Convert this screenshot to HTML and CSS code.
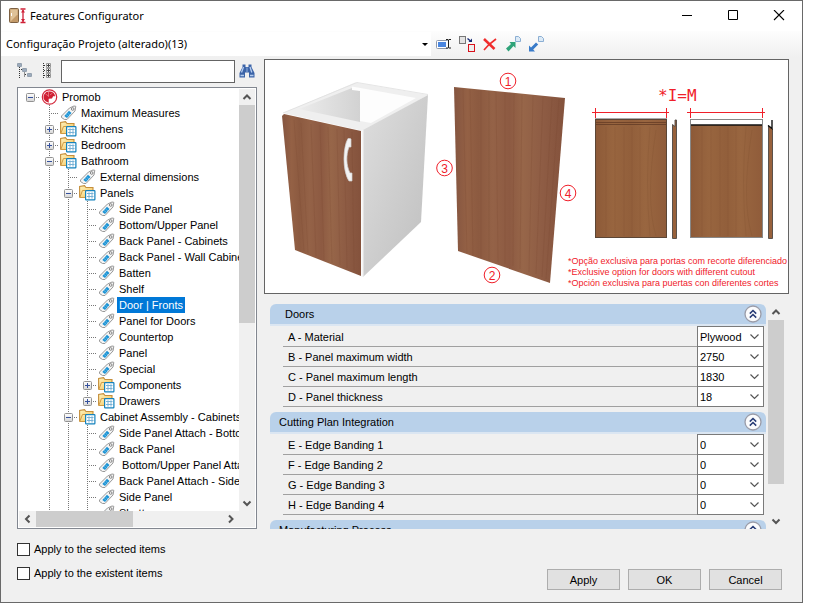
FILE: index.html
```html
<!DOCTYPE html>
<html lang="en">
<head>
<meta charset="utf-8">
<title>Features Configurator</title>
<link rel="stylesheet" href="styles.css">
</head>
<body>
<svg class="sprite" width="0" height="0" aria-hidden="true">
  <defs>
    <linearGradient id="folder-fill" x1="0" y1="0" x2="1" y2="1"><stop offset="0" stop-color="#fff3bd"/><stop offset="1" stop-color="#f0bf55"/></linearGradient>
    <linearGradient id="box-fill" x1="0" y1="0" x2="0" y2="1"><stop offset="0" stop-color="#fff"/><stop offset="1" stop-color="#d5d5d5"/></linearGradient>
  </defs>
  <symbol id="tag" viewBox="0 0 16 16">
    <path d="M1 11 9 3l4.500-2 1.800.3L14.500 6 6.500 14.500H4L1 12.500Z" fill="#f4f4f4" stroke="#999" stroke-width="1"/>
    <path d="M3.800 11 8.500 5.800 11 8 6.500 13Z" fill="#1c93d4"/>
    <path d="M5.500 9.500l2.600 2M7 8l2.500 2" stroke="#8bccef" stroke-width=".6"/>
    <circle cx="12.200" cy="4" r="1.300" fill="#fff" stroke="#777" stroke-width=".9"/>
  </symbol>
  <symbol id="folder" viewBox="0 0 17 16">
    <path d="M.6 12.500V1.500L5.500.6 7 2.500h7v3.500" fill="url(#folder-fill)" stroke="#c58f3c" stroke-width="1.100"/>
    <path d="M.8 12.500 3.500 5.500H14V12.500Z" fill="url(#folder-fill)" stroke="#cf9b45" stroke-width="1"/>
    <rect x="6.600" y="5.600" width="9.300" height="9.300" rx=".6" fill="#fff" stroke="#1382bd" stroke-width="1.200"/>
    <path d="M8 8.500h6.500M8 11.500h6.500M10 7.300v6.300M13 7.300v6.300" stroke="#79b2d6" stroke-width="1"/>
  </symbol>
  <symbol id="plus" viewBox="0 0 9 9"><rect x=".5" y=".5" width="8" height="8" rx="1" fill="url(#box-fill)" stroke="#929292"/><path d="M2 4.500h5M4.500 2v5" stroke="#34509c"/></symbol>
  <symbol id="minus" viewBox="0 0 9 9"><rect x=".5" y=".5" width="8" height="8" rx="1" fill="url(#box-fill)" stroke="#929292"/><path d="M2 4.500h5" stroke="#34509c"/></symbol>
  <symbol id="promob" viewBox="0 0 16 16"><circle cx="8" cy="8" r="7.200" fill="#fff" stroke="#d3283b" stroke-width="1.200"/><path d="M8.300 2.500A5.600 5.600 0 0 0 4 12.300L7.200 13.700V9.800l3.300-.3 1.100-2.200h2A5.600 5.600 0 0 0 8.300 2.500Z" fill="#d01f33"/><path d="M7 2.800v5M4 5l3 2M11 4 8.500 6" stroke="#f7b6bc" stroke-width=".5"/></symbol>
  <symbol id="up" viewBox="0 0 16 16"><path d="M4.500 10 8 6.500 11.500 10" fill="none" stroke="#555" stroke-width="2"/></symbol>
  <symbol id="down" viewBox="0 0 16 16"><path d="M4.500 6.500 8 10l3.500-3.500" fill="none" stroke="#555" stroke-width="2"/></symbol>
  <symbol id="left" viewBox="0 0 16 16"><path d="M10 4.500 6.500 8l3.500 3.500" fill="none" stroke="#555" stroke-width="2"/></symbol>
  <symbol id="right" viewBox="0 0 16 16"><path d="M6.500 4.500 10 8l-3.500 3.500" fill="none" stroke="#555" stroke-width="2"/></symbol>
  <symbol id="collapse" viewBox="0 0 18 18"><circle cx="9" cy="9" r="8" fill="#fafbfd" stroke="#9a9ca8" stroke-width="1.300"/><path d="M5.800 8.600 9 5.500l3.200 3.100M5.800 12.600 9 9.500l3.200 3.100" fill="none" stroke="#253a75" stroke-width="1.500"/></symbol>
</svg>

<div class="window">
  <header class="titlebar">
    <svg class="app-icon" width="18" height="16" viewBox="0 0 18 16"><rect x=".5" y=".5" width="9" height="14" rx="1" fill="#c39a69" stroke="#7c6042"/><path d="M1.500 1.500h7v5l-7 7Z" fill="#dfc298"/><path d="M2.500 5v3" stroke="#fff"/><path d="M11.500 1h5M11.500 14.500h5M14 2v12" stroke="#cf2037" stroke-width="1.300"/><path d="M12 4.500 14 1.500 16 4.500ZM12 11 14 14l2-3Z" fill="#cf2037"/></svg>
    <h1>Features Configurator</h1>
    <button class="caption" aria-label="Minimize"><svg width="12" height="12" viewBox="0 0 12 12"><path d="M1 5.500h10" stroke="#000"/></svg></button>
    <button class="caption" aria-label="Maximize"><svg width="12" height="12" viewBox="0 0 12 12"><path d="M1.500.5h9v9h-9Z" fill="none" stroke="#000"/></svg></button>
    <button class="caption" aria-label="Close"><svg width="12" height="12" viewBox="0 0 12 12"><path d="M1 0l10 10M11 0 1 10" stroke="#000" stroke-width="1.100"/></svg></button>
  </header>

  <div class="toolbar">
    <button class="project"><span>Configuração Projeto (alterado)(13)</span><svg width="6" height="3" viewBox="0 0 6 3"><path d="M0 0h6L3 3Z"/></svg></button>
    <button class="tool" aria-label="Rename"><svg width="16" height="16" viewBox="0 0 16 16"><rect x=".5" y="4.500" width="12" height="8" rx="1" fill="#fff" stroke="#8e98aa"/><rect x="2" y="6" width="8" height="5" fill="#4a86e0"/><path d="M10 3.500h2l.5.500.5-.5h2M12.500 4v7.500M10 12h2l.5-.5.5.5h2" stroke="#222" fill="none"/></svg></button>
    <button class="tool" aria-label="Replace"><svg width="16" height="16" viewBox="0 0 16 16"><rect x=".5" y=".5" width="6" height="7" fill="#e3e3e3" stroke="#777"/><rect x="9.500" y="8.500" width="6" height="7" fill="#eee" stroke="#d8111b"/><path d="M8.500 2.500l3 2.500" stroke="#172a75" stroke-width="1.300"/><path d="M13 2.500V6H9.500Z" fill="#172a75"/></svg></button>
    <button class="tool" aria-label="Delete"><svg width="16" height="16" viewBox="0 0 16 16"><path d="M2 3l10.500 10" stroke="#f02c2c" stroke-width="2.500"/><path d="M14 3 7 8.500 2 14" fill="none" stroke="#f02c2c" stroke-width="1.700"/></svg></button>
    <button class="tool" aria-label="Export"><svg width="16" height="16" viewBox="0 0 16 16"><path d="M1 12.500 6 8 4.500 6H10.500V12L8.500 10l-5 5.500Z" fill="#2fa379"/><path d="M10.500.5h3l2 2v3h-5Z" fill="#dceaf6" stroke="#8baed3"/></svg></button>
    <button class="tool" aria-label="Import"><svg width="16" height="16" viewBox="0 0 16 16"><path d="M1 9.500v6h6L5.200 13.500l5-5L8 6.500l-5 5Z" fill="#397bc9"/><path d="M10.500.5h3l2 2v3h-5Z" fill="#dceaf6" stroke="#8baed3"/></svg></button>
  </div>

  <main class="content">
    <section class="side">
      <form class="search">
        <button class="tool" type="button" aria-label="Collapse all"><svg width="16" height="16" viewBox="0 0 16 16"><path d="M2.500 4v11M7.500 8.500v6M4 6.500h3M8 11.500h4" stroke="#333" stroke-dasharray="1 1" fill="none"/><path d="M.5.500h4v3h-4ZM5.500 5.500h4v3h-4ZM10.500 10.500h4v3h-4Z" fill="#fff" stroke="#94a1ae"/><path d="M1 2h3M6 7h3M11 12h3" stroke="#39577a"/></svg></button>
        <button class="tool" type="button" aria-label="Expand all"><svg width="16" height="16" viewBox="0 0 16 16"><path d="M4.500 0v16M5 2.500h4M5 7.500h4M5 12.500h4" stroke="#333" stroke-dasharray="1 1" fill="none"/><path d="M7.500.5h4v4h-4ZM7.500 5.500h4v4h-4ZM7.500 10.500h4v4h-4Z" fill="#f4f4f4" stroke="#999"/><path d="M8 2.500h3M9.500 1v3M8 7.500h3M9.500 6v3M8 12.500h3M9.500 11v3" stroke="#444"/></svg></button>
        <input type="text" aria-label="Search features">
        <button class="tool find" aria-label="Find"><svg width="16" height="16" viewBox="0 0 16 16"><path d="M3.500 1.500h3V4h3V1.500h3V4l3 6v4.500H10V9.500H6v5H.5V10l3-6Z" fill="#3c64a8"/><path d="M2.500 9.500 4.500 4M11 4l1.800 5.500M1.500 12.500H5M11 12.500h3.500" stroke="#b5cdf0" stroke-width="1.300"/><path d="M8 4.500v4.500" stroke="#8fb0e0"/></svg></button>
      </form>

      <div class="tree-box">
        <div class="tree-view">
          <ul class="tree">
            <li><div class="row"><i class="join"><svg class="box"><use href="#minus"/></svg></i><svg class="ico"><use href="#promob"/></svg><span>Promob</span></div>
              <ul>
                <li><div class="row"><i class="join"></i><svg class="ico"><use href="#tag"/></svg><span>Maximum Measures</span></div></li>
                <li><div class="row"><i class="join"><svg class="box"><use href="#plus"/></svg></i><svg class="ico"><use href="#folder"/></svg><span>Kitchens</span></div></li>
                <li><div class="row"><i class="join"><svg class="box"><use href="#plus"/></svg></i><svg class="ico"><use href="#folder"/></svg><span>Bedroom</span></div></li>
                <li class="open"><div class="row"><i class="join"><svg class="box"><use href="#minus"/></svg></i><svg class="ico"><use href="#folder"/></svg><span>Bathroom</span></div>
                  <ul>
                    <li><div class="row"><i class="join"></i><svg class="ico"><use href="#tag"/></svg><span>External dimensions</span></div></li>
                    <li><div class="row"><i class="join"><svg class="box"><use href="#minus"/></svg></i><svg class="ico"><use href="#folder"/></svg><span>Panels</span></div>
                      <ul>
                        <li><div class="row"><i class="join"></i><svg class="ico"><use href="#tag"/></svg><span>Side Panel</span></div></li>
                        <li><div class="row"><i class="join"></i><svg class="ico"><use href="#tag"/></svg><span>Bottom/Upper Panel</span></div></li>
                        <li><div class="row"><i class="join"></i><svg class="ico"><use href="#tag"/></svg><span>Back Panel - Cabinets</span></div></li>
                        <li><div class="row"><i class="join"></i><svg class="ico"><use href="#tag"/></svg><span>Back Panel - Wall Cabinets</span></div></li>
                        <li><div class="row"><i class="join"></i><svg class="ico"><use href="#tag"/></svg><span>Batten</span></div></li>
                        <li><div class="row"><i class="join"></i><svg class="ico"><use href="#tag"/></svg><span>Shelf</span></div></li>
                        <li><div class="row"><i class="join"></i><svg class="ico"><use href="#tag"/></svg><span class="selected">Door | Fronts</span></div></li>
                        <li><div class="row"><i class="join"></i><svg class="ico"><use href="#tag"/></svg><span>Panel for Doors</span></div></li>
                        <li><div class="row"><i class="join"></i><svg class="ico"><use href="#tag"/></svg><span>Countertop</span></div></li>
                        <li><div class="row"><i class="join"></i><svg class="ico"><use href="#tag"/></svg><span>Panel</span></div></li>
                        <li><div class="row"><i class="join"></i><svg class="ico"><use href="#tag"/></svg><span>Special</span></div></li>
                        <li><div class="row"><i class="join"><svg class="box"><use href="#plus"/></svg></i><svg class="ico"><use href="#folder"/></svg><span>Components</span></div></li>
                        <li><div class="row"><i class="join"><svg class="box"><use href="#plus"/></svg></i><svg class="ico"><use href="#folder"/></svg><span>Drawers</span></div></li>
                      </ul>
                    </li>
                    <li class="open"><div class="row"><i class="join"><svg class="box"><use href="#minus"/></svg></i><svg class="ico"><use href="#folder"/></svg><span>Cabinet Assembly - Cabinets</span></div>
                      <ul>
                        <li><div class="row"><i class="join"></i><svg class="ico"><use href="#tag"/></svg><span>Side Panel Attach - Bottom</span></div></li>
                        <li><div class="row"><i class="join"></i><svg class="ico"><use href="#tag"/></svg><span>Back Panel</span></div></li>
                        <li><div class="row"><i class="join"></i><svg class="ico"><use href="#tag"/></svg><span>&nbsp;Bottom/Upper Panel Attach</span></div></li>
                        <li><div class="row"><i class="join"></i><svg class="ico"><use href="#tag"/></svg><span>Back Panel Attach - Side</span></div></li>
                        <li><div class="row"><i class="join"></i><svg class="ico"><use href="#tag"/></svg><span>Side Panel</span></div></li>
                        <li class="open"><div class="row"><i class="join"></i><svg class="ico"><use href="#tag"/></svg><span>Shutter</span></div></li>
                      </ul>
                    </li>
                  </ul>
                </li>
              </ul>
            </li>
          </ul>
        </div>
        <div class="vbar tree-vbar"><svg class="arrow"><use href="#up"/></svg><div class="track"><div class="thumb"></div></div><svg class="arrow"><use href="#down"/></svg></div>
        <div class="hbar"><svg class="arrow"><use href="#left"/></svg><div class="track"><div class="thumb"></div></div><svg class="arrow"><use href="#right"/></svg></div>
      </div>
    </section>

    <section class="main">
      <svg class="preview" viewBox="265 60 523 233" role="img" aria-label="Door diagram">
        <defs>
          <linearGradient id="wood" x1="0" x2="1" y1="0" y2="0"><stop offset="0" stop-color="#855540"/><stop offset=".12" stop-color="#946145"/><stop offset=".22" stop-color="#8c5a40"/><stop offset=".35" stop-color="#946247"/><stop offset=".5" stop-color="#8d5a42"/><stop offset=".62" stop-color="#976649"/><stop offset=".8" stop-color="#8e5c44"/><stop offset="1" stop-color="#84523c"/></linearGradient>
          <linearGradient id="wood-flat" x1="0" x2="1" y1="0" y2="0"><stop offset="0" stop-color="#8d5a38"/><stop offset=".25" stop-color="#98653f"/><stop offset=".5" stop-color="#925f3b"/><stop offset=".7" stop-color="#996640"/><stop offset="1" stop-color="#905c3a"/></linearGradient>
          <linearGradient id="side-fill" x1="0" y1="0" x2="1" y2="1"><stop offset="0" stop-color="#dedede"/><stop offset=".5" stop-color="#cecece"/><stop offset="1" stop-color="#bfbfbf"/></linearGradient>
          <linearGradient id="inner-fill" x1="0" x2="1"><stop offset="0" stop-color="#ececec"/><stop offset="1" stop-color="#d2d2d2"/></linearGradient>
        </defs>
        <path d="M283 113 355 82.500 428 95 363 131Z" fill="#efefef"/>
        <path d="M299 109 352 88 360 91V122Z" fill="url(#inner-fill)"/>
        <path d="M360 91 352 90V86.500L416 98 371 123 360 121Z" fill="#fdfdfd"/>
        <path d="M283 113 357 82.500 428 94.500" fill="none" stroke="#dedede" stroke-width=".8"/>
        <path d="M363 130 428 95 421 222 363 277Z" fill="url(#side-fill)"/>
        <path d="M362.500 130v147" stroke="#f5f5f5" stroke-width="2"/>
        <path d="M282 116 284 114 361 131V276L295 250Z" fill="url(#wood)"/>
        <g stroke="#74452e" stroke-opacity=".18" fill="none"><path d="M294 120 304 251M301 123 308 253M311 124 316 256M320 125 324 260M328 127 332 263M337 129 340 265M344 129 347 268M352 132 354 270"/></g>
        <path d="M350 138.500h-2c-5 8-6 32 1 42.500h3v-8h-2c-4-8-4-18-1-26h2v-8Z" fill="#f3f3f3" stroke="#cfcfcf" stroke-width=".7"/>
        <path d="M454 87 565 98 550 283 458 251Z" fill="url(#wood)"/>
        <g stroke="#74452e" stroke-opacity=".18" fill="none"><path d="M463 89 467 253M470 89 473 256M481 90v168M489 91v170M496 92l2 170M505 93v171M514 94l-1 172M522 95l-2 174M533 96l-4 176M543 97l-7 177M552 98l-10 179M559 99l-13 180"/></g>
        <g class="mark"><circle cx="508" cy="81" r="7.800"/><circle cx="492" cy="275" r="7.800"/><circle cx="444.500" cy="168" r="7.800"/><circle cx="568" cy="193" r="7.800"/></g>
        <g class="mark-text"><text x="508" y="85.500">1</text><text x="492" y="279.500">2</text><text x="444.500" y="172.500">3</text><text x="568" y="197.500">4</text></g>
        <text class="formula" x="658" y="101">*I=M</text>
        <g class="mark"><path d="M592 112.500h77M595.500 108v10M666.500 108v10M687 112.500h78M690.500 108v10M762.500 108v10"/></g>
        <rect x="595.500" y="119.500" width="71" height="118" fill="url(#wood-flat)" stroke="#5b4636"/>
        <path d="M595 118.500h72" stroke="#aaa"/><path d="M596 122.500h70" stroke="#6f4329"/><path d="M596 124.500h70" stroke="#5b3722" stroke-width=".7"/>
        <rect x="690.500" y="119.500" width="72" height="118" fill="#fff" stroke="#888"/>
        <rect x="691" y="125" width="71" height="112" fill="url(#wood-flat)"/><path d="M691 125h71" stroke="#111" stroke-width="1.600"/>
        <g stroke="#704324" stroke-opacity=".16" fill="none"><path d="M606 127v109M615 127v109M624 127v109M632 127v109M640 127v109M650 127q-5 55 0 109M656 130q-11 70 0 106M702 127v109M711 127v109M720 127v109M728 127v109M736 127v109M746 127q-5 55 0 109M752 130q-11 70 0 106"/></g>
        <path d="M672.500 124.500 675 126.500V120h1.500v118.500h-4Z" fill="#98613b" stroke="#4e4743" stroke-width=".9"/>
        <path d="M768.500 125.500 772.500 129v109.500h-4Z" fill="#98613b" stroke="#4e4743" stroke-width=".9"/><path d="M768 125.500l4 3V120" fill="none" stroke="#111" stroke-width="1.400"/>
        <g class="note"><text x="568" y="264">*Opção exclusiva para portas com recorte diferenciado</text><text x="568" y="275">*Exclusive option for doors with different cutout</text><text x="568" y="286">*Opción exclusiva para puertas con diferentes cortes</text></g>
      </svg>

      <div class="settings">
        <div class="groups">
          <section class="group">
            <h2 class="first">Doors<button aria-label="Collapse Doors"><svg width="18" height="18"><use href="#collapse"/></svg></button></h2>
            <div class="fields">
              <div class="field"><label for="a">A - Material</label><select id="a"><option>Plywood</option></select></div>
              <div class="field"><label for="b">B - Panel maximum width</label><select id="b"><option>2750</option></select></div>
              <div class="field"><label for="c">C - Panel maximum length</label><select id="c"><option>1830</option></select></div>
              <div class="field"><label for="d">D - Panel thickness</label><select id="d"><option>18</option></select></div>
            </div>
          </section>
          <section class="group">
            <h2>Cutting Plan Integration<button aria-label="Collapse Cutting Plan Integration"><svg width="18" height="18"><use href="#collapse"/></svg></button></h2>
            <div class="fields">
              <div class="field"><label for="e">E - Edge Banding 1</label><select id="e"><option>0</option></select></div>
              <div class="field"><label for="f">F - Edge Banding 2</label><select id="f"><option>0</option></select></div>
              <div class="field"><label for="g">G - Edge Banding 3</label><select id="g"><option>0</option></select></div>
              <div class="field"><label for="h">H - Edge Banding 4</label><select id="h"><option>0</option></select></div>
            </div>
          </section>
          <section class="group">
            <h2>Manufacturing Process<button aria-label="Collapse Manufacturing Process"><svg width="18" height="18"><use href="#collapse"/></svg></button></h2>
          </section>
        </div>
        <div class="vbar settings-vbar"><svg class="arrow"><use href="#up"/></svg><div class="track"><div class="thumb"></div></div><svg class="arrow"><use href="#down"/></svg></div>
      </div>
    </section>
  </main>

  <footer class="footer">
    <div class="checks">
      <label><input type="checkbox">Apply to the selected items</label>
      <label><input type="checkbox">Apply to the existent items</label>
    </div>
    <div class="actions"><button>Apply</button><button>OK</button><button>Cancel</button></div>
  </footer>
</div>
</body>
</html>
```
FILE: styles.css
```css
* { box-sizing: border-box; }
body {
  margin: 0;
  padding: 0 16px 7px 0;
  background: #fff;
  color: #000;
  font: 11px/16px "Liberation Sans", Arial, sans-serif;
}
button, input, select { font: inherit; color: inherit; margin: 0; }
button { padding: 0; border: 0; background: none; }
svg { display: block; flex: none; }
ul { margin: 0; padding: 0; list-style: none; }
.sprite { position: absolute; }

.window {
  display: flex;
  flex-direction: column;
  min-height: calc(100vh - 7px);
  border: 1px solid #696969;
  background: #f0f0f0;
}

.titlebar { display: flex; align-items: center; height: 30px; padding-left: 8px; background: #fff; }
.titlebar h1 { flex: 1; margin: 0 0 0 3px; font: 11px/16px "Noto Sans", "Open Sans", sans-serif; }
.caption { display: flex; align-items: center; justify-content: center; width: 46px; height: 30px; }

.toolbar {
  display: flex;
  align-items: center;
  height: 26px;
  background: linear-gradient(#fdfdfd, #f0f0f0);
}
.project {
  display: flex;
  align-items: center;
  justify-content: space-between;
  flex: 0 1 430px;
  height: 24px;
  padding: 0 3px 0 5px;
  background: #fff;
  font: 11px/16px "Noto Sans", "Open Sans", sans-serif;
}
.tool { display: flex; align-items: center; justify-content: center; width: 23px; height: 22px; }
.toolbar .project + .tool { margin-left: 1px; }

.content { display: flex; gap: 7px; padding: 2px 13px 0 16px; }
.side { flex: 0 0 240px; }
.main { flex: 1; min-width: 0; }

.search { display: flex; align-items: center; height: 28px; padding-bottom: 4px; }
.search .tool { width: 22px; justify-content: flex-start; }
.search input { flex: 1; min-width: 0; height: 23px; border: 1px solid #646464; background: #fff; padding: 0 4px; }
.search .find { margin-left: 4px; width: 18px; }

.tree-box {
  display: grid;
  grid-template-columns: 1fr 16px;
  grid-template-rows: 422px 16px;
  padding: 1px;
  border: 1px solid #828790;
  background: #fff;
}
.tree-view { overflow: hidden; padding-left: 2px; }
.tree { width: max-content; }
.tree ul { margin-left: 19px; }
.tree ul > li {
  background: repeating-linear-gradient(#777 0 1px, transparent 1px 2px) 9px 0 / 1px 100% no-repeat;
}
.tree ul > li:last-child:not(.open) { background-size: 1px 8px; }
.row { display: flex; align-items: center; height: 16px; white-space: nowrap; }
.join {
  display: flex;
  align-items: center;
  width: 19px;
  height: 16px;
  padding-left: 5px;
  background: repeating-linear-gradient(90deg, #777 0 1px, transparent 1px 2px) 9px 8px / 11px 1px no-repeat;
}
.box { width: 9px; height: 9px; }
.ico { width: 17px; height: 16px; margin-left: 1px; }
.row span { margin-left: 2px; padding: 0 2px; }
.row .selected { background: #0078d7; color: #fff; }

.vbar { display: flex; flex-direction: column; width: 16px; background: #f0f0f0; }
.hbar { display: flex; grid-column: 1 / -1; padding-right: 16px; background: #f0f0f0; }
.track { display: flex; flex: 1; min-height: 0; }
.vbar .track { flex-direction: column; }
.arrow { width: 16px; height: 16px; }
.hbar .arrow { width: 17px; }
.thumb { background: #cdcdcd; }
.tree-vbar .thumb { height: 56%; }
.hbar .thumb { width: 52%; }
.settings-vbar .thumb { height: 85%; }

.preview { width: 100%; height: auto; border: 1px solid #646464; background: #fff; }
.mark { fill: none; stroke: #f0202a; stroke-width: 1; }
.mark-text, .formula, .note { fill: #f0202a; }
.mark-text { font: 12px "Liberation Sans", Arial, sans-serif; text-anchor: middle; }
.formula { font: 16px "DejaVu Sans Mono", monospace; }
.note { font: 9px "Liberation Sans", Arial, sans-serif; }

.settings { display: flex; height: 225px; margin: 10px 5px 0 6px; }
.groups { flex: 1; min-width: 0; overflow: hidden; padding-right: 2px; }
.group { margin-bottom: 5px; }
.group h2 {
  display: flex;
  align-items: center;
  justify-content: space-between;
  height: 22px;
  margin: 0;
  padding: 0 4px 0 9px;
  border-bottom: 2px solid #dbe6f2;
  border-radius: 6px 6px 0 0;
  background: #b9d1ea;
  font: inherit;
}
.group .first { padding-left: 15px; }
.fields { margin: 1px 2px 0 13px; }
.field { display: flex; align-items: center; height: 20px; border-bottom: 1px solid #a0a0a0; }
.field label { flex: 1; padding-left: 5px; }
.field select {
  width: 67px;
  height: 21px;
  padding: 0 2px;
  border: 1px solid #7a7a7a;
  border-radius: 0;
  appearance: none;
  background: #fff url("data:image/svg+xml,%3Csvg xmlns='http://www.w3.org/2000/svg' width='9' height='6'%3E%3Cpath d='M.5 .5l4 4 4-4' fill='none' stroke='%23555' stroke-width='1.200'/%3E%3C/svg%3E") right 4px center no-repeat;
}

.footer { display: flex; justify-content: space-between; align-items: flex-end; padding: 12px 20px 11px 16px; }
.checks { display: flex; flex-direction: column; gap: 8px; padding-bottom: 9px; }
.checks label { display: flex; align-items: center; gap: 4px; }
.checks input { width: 13px; height: 13px; appearance: none; border: 1px solid #333; background: #fff; }
.actions { display: flex; gap: 8px; }
.actions button { width: 73px; height: 21px; border: 1px solid #adadad; background: #e1e1e1; }
```
